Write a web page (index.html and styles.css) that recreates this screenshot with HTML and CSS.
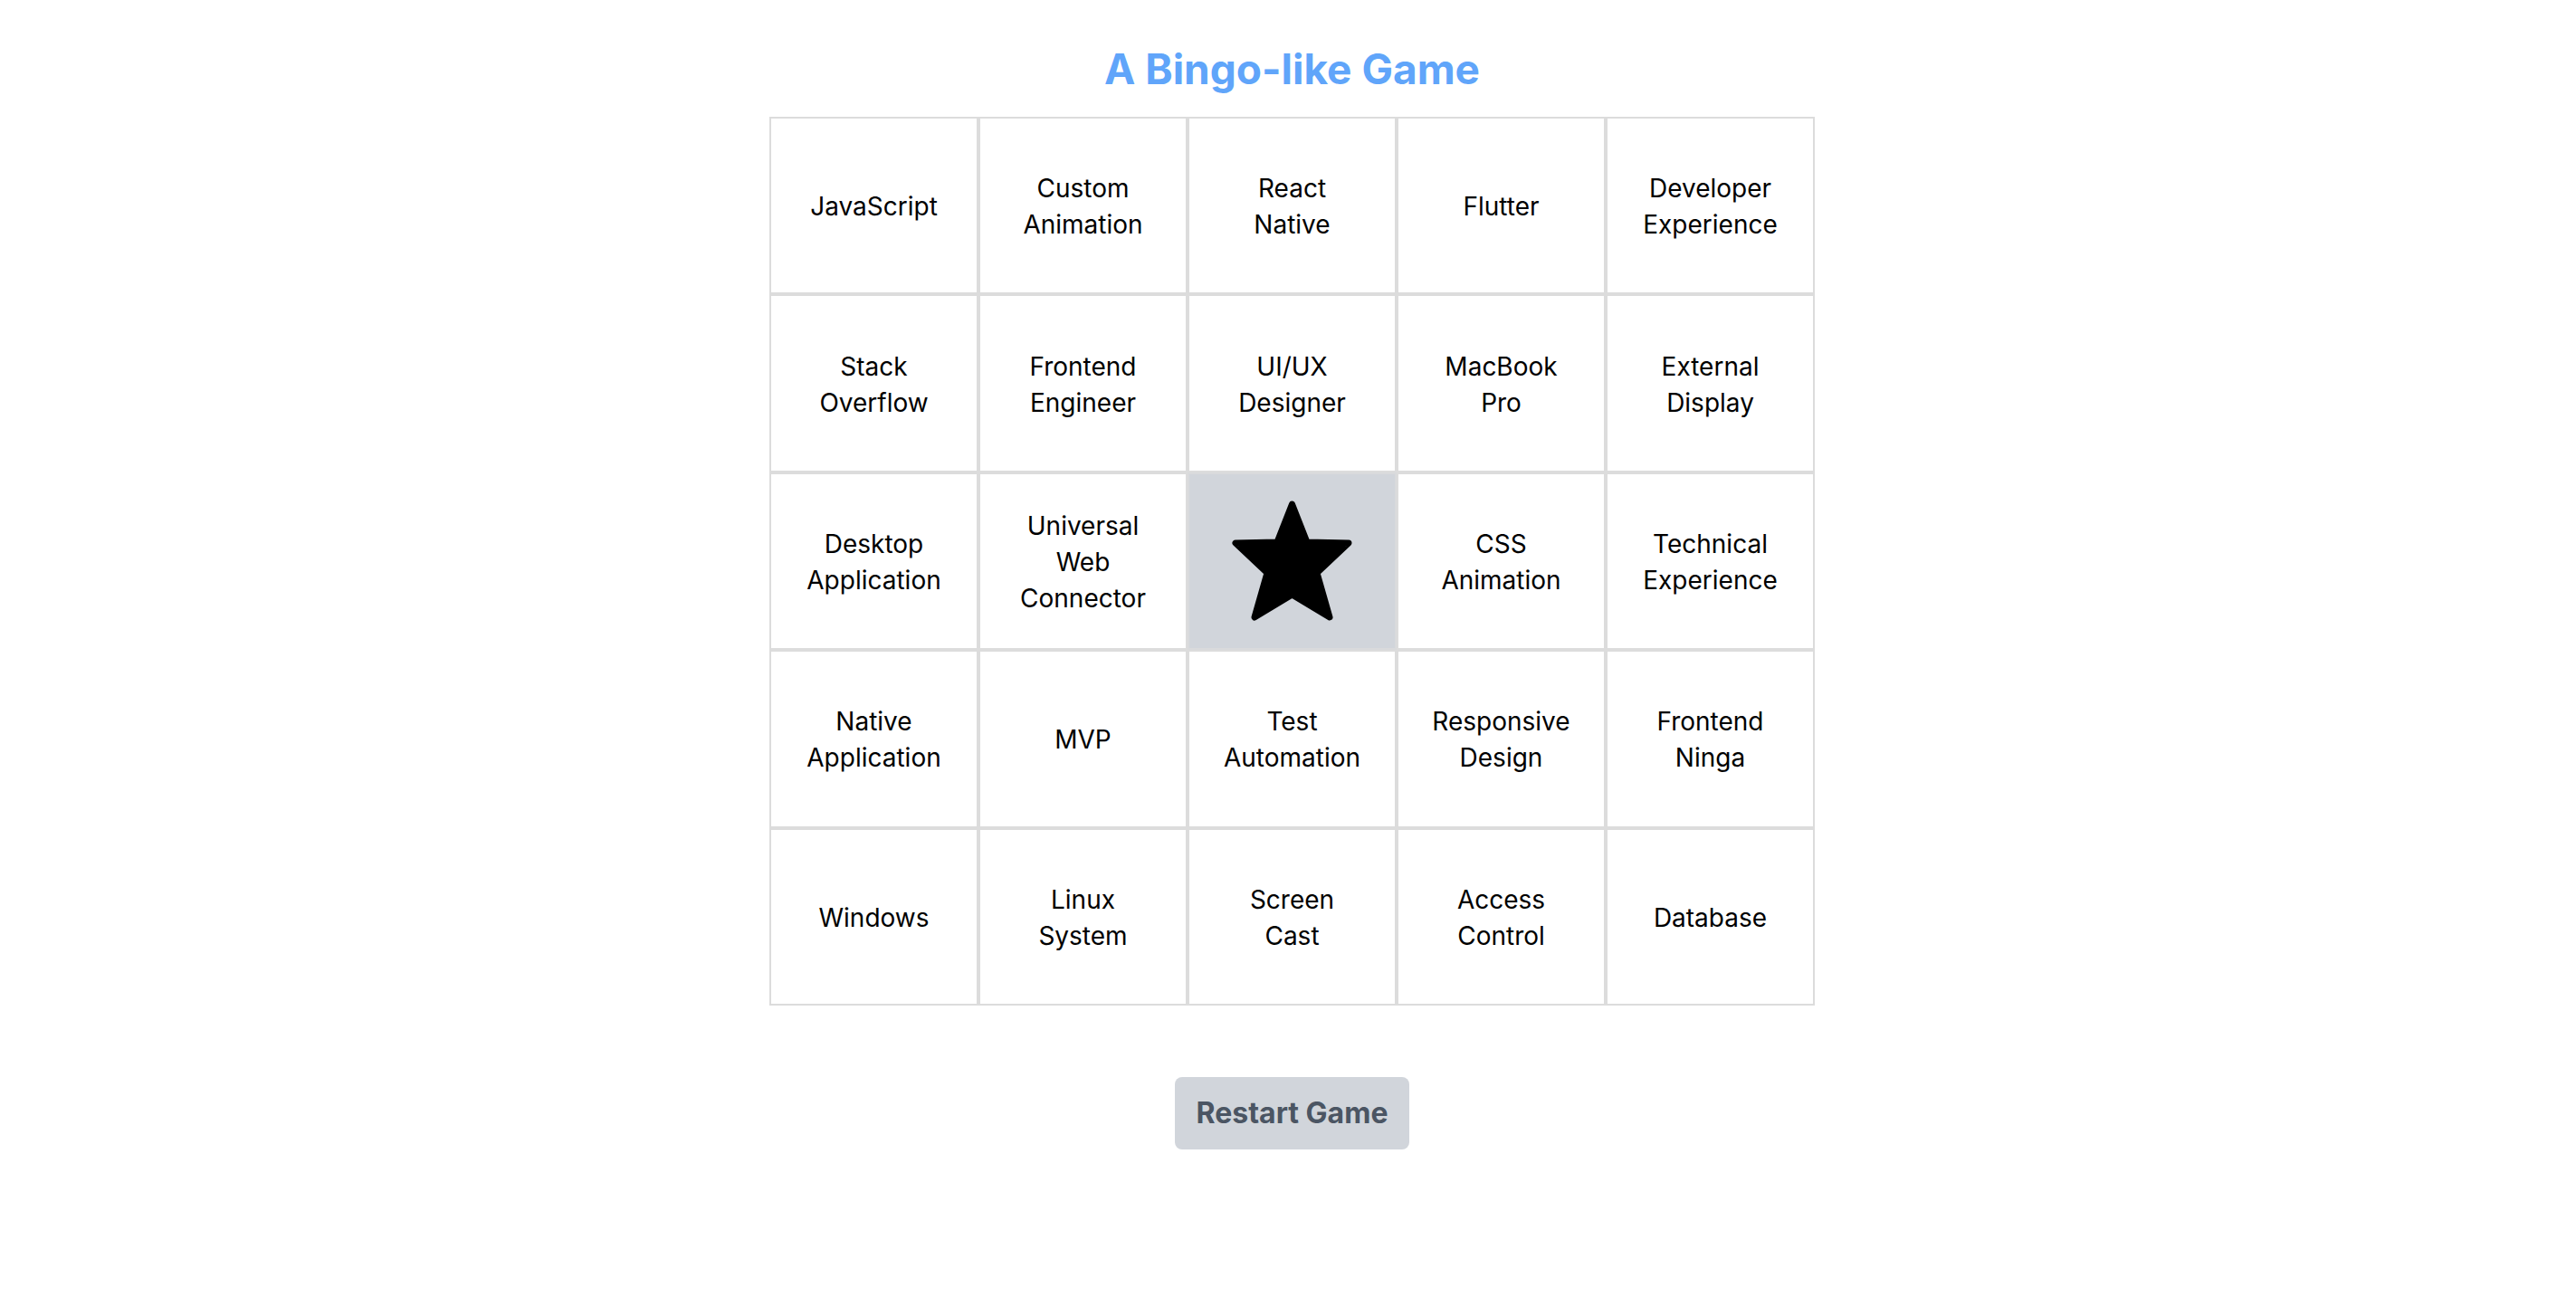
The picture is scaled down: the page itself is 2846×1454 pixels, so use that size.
FILE: index.html
```html
<!DOCTYPE html>
<html lang="en">
<head>
    <meta charset="UTF-8">
    <meta name="viewport" content="width=device-width, initial-scale=1.0">
    <title>A Bingo-like Game</title>
    <link rel="stylesheet" href="styles.css">
</head>
<body>
    <div class="game">
        <h1 class="title">A Bingo-like Game</h1>
        <div class="board" id="board"></div>
        <button class="restart" onclick="restartGame()">Restart Game</button>
    </div>

    <script>
        const words = [
            "JavaScript", "Custom Animation", "React Native", "Flutter", "Developer Experience",
            "Stack Overflow", "Frontend Engineer", "UI/UX Designer", "MacBook Pro", "External Display",
            "Desktop Application", "Universal Web Connector", "FREE", "CSS Animation", "Technical Experience",
            "Native Application", "MVP", "Test Automation", "Responsive Design", "Frontend Ninga",
            "Windows", "Linux System", "Screen Cast", "Access Control", "Database"
        ];
        const board = document.getElementById("board");
        let marked = [];

        const starIcon = `
            <svg class="star" viewBox="0 0 133 133" aria-hidden="true">
                <polygon points="66.5,4 83,46 129,47 94,80 108,129 66.5,104 25,129 39,80 4,47 50,46"
                         fill="#000" stroke="#000" stroke-width="7" stroke-linejoin="round"/>
            </svg>`;

        function renderBoard() {
            board.innerHTML = "";
            words.forEach((word, i) => {
                const cell = document.createElement("div");
                cell.className = "cell";
                if (word === "FREE") {
                    cell.classList.add("free");
                    cell.innerHTML = starIcon;
                } else {
                    cell.innerHTML = word.split(" ").join("<br>");
                    if (marked.includes(i)) cell.classList.add("marked");
                    cell.onclick = () => toggleCell(i);
                }
                board.appendChild(cell);
            });
        }

        function toggleCell(i) {
            if (marked.includes(i)) {
                marked = marked.filter(m => m !== i);
            } else {
                marked.push(i);
            }
            renderBoard();
        }

        function restartGame() {
            marked = [];
            renderBoard();
        }

        renderBoard();
    </script>
</body>
</html>
```

FILE: styles.css
```css
/* General styles */
body {
    font-family: Inter, "Noto Sans", sans-serif;
    margin: 0;
    padding: 0;
    background-color: #ffffff;
    color: #000;
}

.game {
    display: flex;
    flex-direction: column;
    align-items: center;
    padding: 44px 0 0 9px;
}

.title {
    margin: 0 0 21px;
    font-size: 46px;
    line-height: 64px;
    font-weight: 700;
    color: #60a5fa;
}

.board {
    display: grid;
    grid-template-columns: repeat(5, 231px);
    grid-auto-rows: 196.4px;
}

.cell {
    display: flex;
    align-items: center;
    justify-content: center;
    text-align: center;
    padding-top: 2px;
    border: 2px solid #dcdcdc;
    font-size: 28px;
    line-height: 40px;
    cursor: pointer;
    user-select: none;
}

.cell.marked,
.cell.free {
    background-color: #d1d5db;
}

.cell.free {
    padding-top: 0;
    border-color: #d9dadc;
    cursor: default;
}

.star {
    width: 133px;
    height: 133px;
}

.restart {
    margin-top: 79px;
    padding: 16px 24px;
    font-family: inherit;
    font-size: 32px;
    line-height: 48px;
    font-weight: 700;
    color: #4b5563;
    background-color: #d1d5db;
    border: none;
    border-radius: 8px;
    cursor: pointer;
}

.restart:hover {
    background-color: #c5cad1;
}
```
